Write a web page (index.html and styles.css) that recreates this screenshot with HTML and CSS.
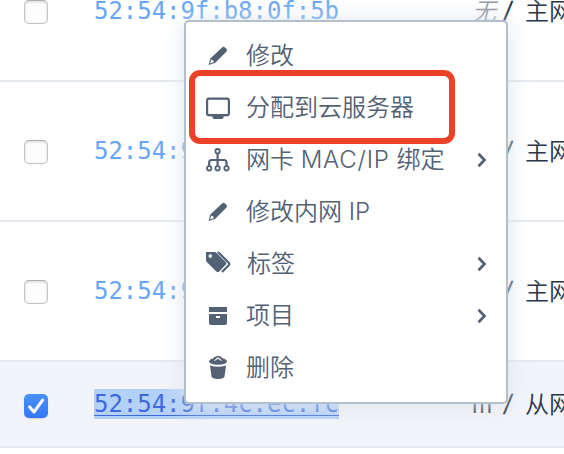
FILE: index.html
```
<!DOCTYPE html>
<html lang="zh-CN">
<head>
<meta charset="utf-8">
<title>网卡</title>
<link rel="stylesheet" href="styles.css">
</head>
<body>
<main class="table">
  <div class="row row-first"><span class="check"></span><a class="mac">52:54:9f:b8:0f:5b</a><span class="kind"><i>无</i><b>/</b><span>主网</span></span></div>
  <div class="row"><span class="check"></span><a class="mac">52:54:9</a><span class="kind"><i></i><b>/</b><span>主网</span></span></div>
  <div class="row"><span class="check"></span><a class="mac">52:54:9</a><span class="kind"><i></i><b>/</b><span>主网</span></span></div>
  <div class="row selected"><span class="check checked"><svg viewBox="0 0 24 24"><path d="M5.5 12.8 10 18 18.6 6.2"/></svg></span><a class="mac">52:54:9f:4c:ec:fc</a><span class="kind"><em>m</em><b>/</b><span>从网</span></span></div>
</main>
<nav class="menu">
  <div class="item"><svg class="icon" viewBox="0 0 28 28"><use href="#pencil"/></svg><span>修改</span></div>
  <div class="item"><svg class="icon" viewBox="0 0 28 28"><rect class="line" x="3.1" y="4.6" width="21.8" height="16.6" rx="2"/><path d="M6 20.5h16v1.8h-2.5V24L18 25h-8l-1.500-1v-1.700H6z"/></svg><span>分配到云服务器</span></div>
  <div class="item"><svg class="icon" viewBox="0 0 28 28"><g class="line thin"><circle cx="13.6" cy="5.2" r="2.2"/><circle cx="5.2" cy="22.300" r="2.200"/><circle cx="13.6" cy="22.300" r="2.200"/><circle cx="22.500" cy="22.300" r="2.200"/></g><path class="line" d="M13.6 7.500v12.500M5.200 20v-3.500q0-2.500 2.500-2.500h12.300q2.500 0 2.500 2.500V20"/></svg><span>网卡 <span class="latin wide">MAC/IP</span> 绑定</span><svg class="arrow" viewBox="0 0 10 16"><path d="m1.5 1.8 6 6.2-6 6.2"/></svg></div>
  <div class="item"><svg class="icon" viewBox="0 0 28 28"><use href="#pencil"/></svg><span>修改内网 <span class="latin">IP</span></span></div>
  <div class="item"><svg class="icon" viewBox="0 0 28 28"><path fill-rule="evenodd" d="M2 2h8.5q1.200 0 2.200 1l9 9q1.400 1.400 0 2.800l-6.500 6.600q-1.400 1.400-2.800 0L3 12.200q-1-1-1-2.200zM6.300 4.300a1.800 1.800 0 1 0 0 3.600 1.800 1.800 0 0 0 0-3.600z"/><path class="line" d="M13.500 2.500q1 0 2 1l9 9q1.500 1.500 0 3l-6.500 6.500"/></svg><span class="tag-label">标签</span><svg class="arrow" viewBox="0 0 10 16"><path d="m1.5 1.8 6 6.2-6 6.2"/></svg></div>
  <div class="item"><svg class="icon" viewBox="0 0 28 28"><path fill-rule="evenodd" d="M5 5h18v5H5zM5 12h18v9q0 2-2 2H7q-2 0-2-2zM12 14v2h4v-2z"/></svg><span>项目</span><svg class="arrow" viewBox="0 0 10 16"><path d="m1.5 1.8 6 6.2-6 6.2"/></svg></div>
  <div class="item"><svg class="icon" viewBox="0 0 28 28"><path fill-rule="evenodd" d="M5 7.8Q5 5.500 9 4.500q2.500-2.700 5-2.700T19 4.500q4 1 4 3.300-1.500 3-9 3t-9-3zM9.500 6.900l2.500-.7L14 4.500l2 1.700 2.500.7L14 3z"/><path d="M6 11.600q8 2.400 16 0l-1.500 11q-.5 2.400-6.500 2.400t-6.500-2.400z"/></svg><span>删除</span></div>
</nav>
<div class="highlight"></div>
<svg class="defs"><defs><g id="pencil"><path fill-rule="evenodd" d="M18.300 5.300q1.200-1.200 2.400 0l1.800 1.800q1.200 1.200 0 2.400L11 21 4.600 23l1.700-6.500zM7.300 17.600l-1.200 3.800 3.600-1.100-.4-1.800z"/></g></defs></svg>
</body>
</html>
```
FILE: styles.css
```
* { box-sizing: border-box; }
html { overflow: hidden; }
body {
  margin: 0;
  height: 454px;
  overflow: hidden;
  position: relative;
  background: #fff;
  color: #283648;
  font: 350 24px/36px "Liberation Sans", "Noto Sans CJK SC", sans-serif;
}
.row {
  display: grid;
  grid-template-columns: 94px 378px 1fr;
  align-items: center;
  height: 140px;
  border-bottom: 2px solid #e4e9ef;
  white-space: nowrap;
}
.row-first { margin-top: -58px; }
.table { height: 454px; overflow: hidden; }
.selected { height: 86px; background: #f3f4f9; }
.check {
  width: 24px;
  height: 24px;
  margin: 2px 0 0 24px;
  border: 1px solid #c4c4c4;
  border-top-color: #aeaeae;
  border-radius: 5px;
  background: #fdfdfd;
  box-shadow: inset 0 1px 3px rgba(0,0,0,.16);
}
.checked {
  border: 0;
  background: linear-gradient(#4990fb, #3478f6);
  box-shadow: 0 1px 1px rgba(0,0,0,.15);
}
.checked { margin-top: 4px; }
.checked svg { display: block; }
.checked path { fill: none; stroke: #fff; stroke-width: 3; stroke-linecap: round; stroke-linejoin: round; }
.mac {
  justify-self: start;
  font: 24px/30px "DejaVu Sans Mono", monospace;
  letter-spacing: -.04px;
  color: #66a5f7;
}
.selected .mac {
  background: #b4d1f8;
  color: #3d69df;
  text-decoration: underline;
  text-decoration-thickness: 1px;
  text-underline-offset: 3px;
}
.kind { display: grid; grid-template-columns: 32px 21px auto; padding-top: 1px; }
.kind i { color: #8e959f; }
.kind em { font-style: normal; }
.kind b { font-weight: 300; font-size: 28px; transform: skewX(-8deg); }
.menu {
  position: absolute;
  left: 184px;
  top: 20px;
  width: 324px;
  height: 384px;
  padding: 8px 19px 8px 20px;
  border: 2px solid #b3bfcb;
  border-radius: 5px;
  background: #fff;
  box-shadow: 0 2px 24px #dde4ec;
  color: #536174;
}
.item { display: flex; align-items: center; height: 52px; white-space: nowrap; }
.icon { width: 28px; height: 28px; margin-left: -2px; margin-right: 14px; fill: #536174; flex: none; }
.tag-label { padding-left: 1px; }
.line { fill: none; stroke: #536174; stroke-width: 2.2; }
.thin { stroke-width: 1.8; }
.latin { font: 350 24px/1 Inter, "Liberation Sans", sans-serif; }
.wide { letter-spacing: .8px; }
.arrow { width: 10px; height: 16px; margin-left: auto; fill: none; stroke: #536174; stroke-width: 2.7; }
.highlight {
  position: absolute;
  left: 189px;
  top: 70px;
  width: 266px;
  height: 74px;
  border: 6px solid #ec4127;
  border-radius: 11px;
}
.defs { position: absolute; width: 0; height: 0; }
```
